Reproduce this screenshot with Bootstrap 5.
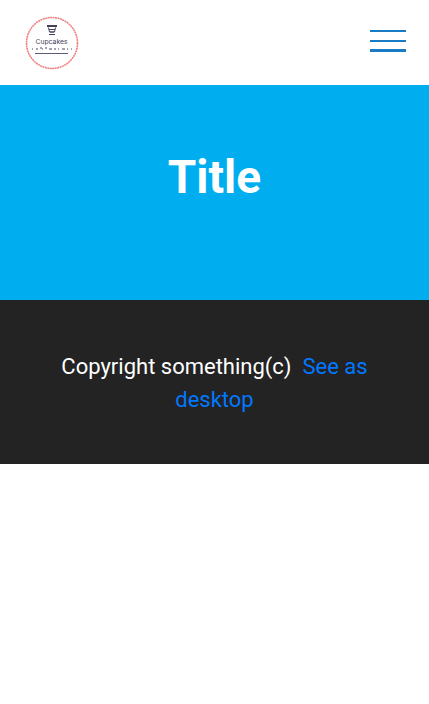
<!DOCTYPE html>
<html lang="en">
<head>
<meta charset="utf-8">
<meta name="viewport" content="width=device-width, initial-scale=1">
<title>Title</title>
<link href="https://cdn.jsdelivr.net/npm/bootstrap@5.3.0/dist/css/bootstrap.min.css" rel="stylesheet">
<style>
body { font-family: Roboto, sans-serif; }
.site-bar { padding: 16px 23px 15px 25px; }
.site-logo { width: 54px; height: 54px; }
.menu-btn { width: 36px; gap: 8px; margin-bottom: 4px; }
.menu-btn span { height: 2px; background: #197bc6; }
.menu-btn span:last-child { height: 3px; margin-top: -1px; }
.hero { background: #00aef0; padding: 64px 24px 95px; }
.hero h1 { font-size: 46px; line-height: 56px; }
.site-footer { background: #232323; padding: 50px 32px 48px; font-size: 22px; line-height: 33px; }
.site-footer a { color: #0078ff; }
</style>
</head>
<body class="bg-white">
<header>
  <nav class="navbar site-bar d-flex justify-content-between align-items-center" aria-label="Main">
    <a class="navbar-brand p-0 m-0 d-flex" href="#" aria-label="Cupcakes">
      <svg class="site-logo" viewBox="0 0 54 54" aria-hidden="true">
        <circle cx="27" cy="27" r="25.5" fill="none" stroke="#f07c7c" stroke-width="1.5" stroke-dasharray="2 .5"/>
        <g fill="none" stroke="#454058">
          <path d="M22 10h10" stroke-width="2"/>
          <path d="M23.5 11.500l1 4.500h5l1-4.500M24 13.500h6"/>
          <path d="M26 15v2m2-2v2M24 18.500h6"/>
        </g>
        <text x="26.500" y="28" text-anchor="middle" font-family="Inter, sans-serif" font-size="6.800" fill="#454058">Cupcakes</text>
        <path d="M7 33h1m3 0h2m2-1h2m0 1h1m2-1h2m2 1h3m2 0h2m2 0h1m3 0h3m2 0h1m3 0h1" stroke="#88839a" stroke-width="1.4"/>
        <path d="M10 37.500h33" stroke="#605b75" stroke-width="1"/>
      </svg>
    </a>
    <button type="button" class="menu-btn btn p-0 border-0 rounded-0 d-flex flex-column" aria-label="Toggle navigation">
      <span class="w-100"></span><span class="w-100"></span><span class="w-100"></span>
    </button>
  </nav>
</header>
<main>
  <section class="hero text-center text-white"><h1 class="fw-bold m-0">Title</h1></section>
</main>
<footer class="site-footer text-center text-white">
  <p class="m-0">Copyright something(c)&nbsp; <a class="text-decoration-none" href="#">See as desktop</a></p>
</footer>
<script src="https://cdn.jsdelivr.net/npm/bootstrap@5.3.0/dist/js/bootstrap.bundle.min.js"></script>
</body>
</html>
